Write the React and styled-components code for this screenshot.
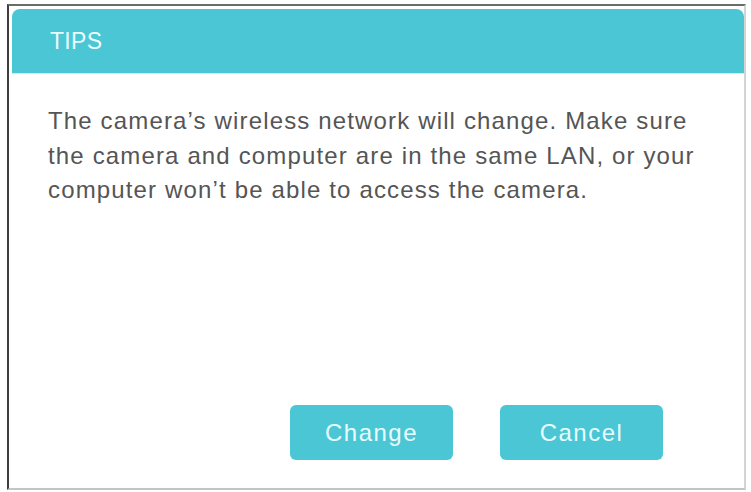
import styled, { createGlobalStyle } from 'styled-components'

const GlobalStyle = createGlobalStyle`
    body {
        margin: 0;
        background: #fff;
        font-family: "Liberation Sans", Arial, sans-serif;
    }
`

const Frame = styled.div`
    box-sizing: border-box;
    margin: 4px 0 0 7px;
    width: 739px;
    height: 486px;
    border-top: 2px solid #6b6b6b;
    border-left: 2px solid #3f3f3f;
    border-right: 2px solid #d4d4d4;
    border-bottom: 2px solid #c4c4c4;
    padding: 3px 0 0 3px;
`

const Dialog = styled.div`
    display: flex;
    flex-direction: column;
    height: 100%;
`

const Header = styled.div`
    height: 64px;
    display: flex;
    align-items: center;
    padding-left: 38px;
    background: #4bc6d4;
    border-radius: 8px 8px 0 0;
    border-bottom: 1px solid #bff0f6;
    color: #eafcff;
    font-size: 23px;
    letter-spacing: 0.3px;
`

const Message = styled.p`
    margin: 0;
    padding: 30px 30px 0 36px;
    font-size: 24px;
    line-height: 34.5px;
    letter-spacing: 1.15px;
    color: #555;
`

const Footer = styled.div`
    margin-top: auto;
    display: flex;
    justify-content: flex-end;
    gap: 47px;
    padding: 0 81px 28px 0;
`

const Button = styled.button`
    width: 163px;
    height: 55px;
    border: none;
    border-radius: 6px;
    background: #4bc6d4;
    color: #e8fcff;
    font-family: inherit;
    font-size: 24px;
    letter-spacing: 1.5px;
    cursor: pointer;
`

export default function App() {
    return (
        <>
            <GlobalStyle />
            <Frame>
                <Dialog>
                    <Header>TIPS</Header>
                    <Message>
                        The camera’s wireless network will change. Make sure the camera and computer are in the same LAN, or your computer won’t be able to access the camera.
                    </Message>
                    <Footer>
                        <Button>Change</Button>
                        <Button>Cancel</Button>
                    </Footer>
                </Dialog>
            </Frame>
        </>
    )
}
